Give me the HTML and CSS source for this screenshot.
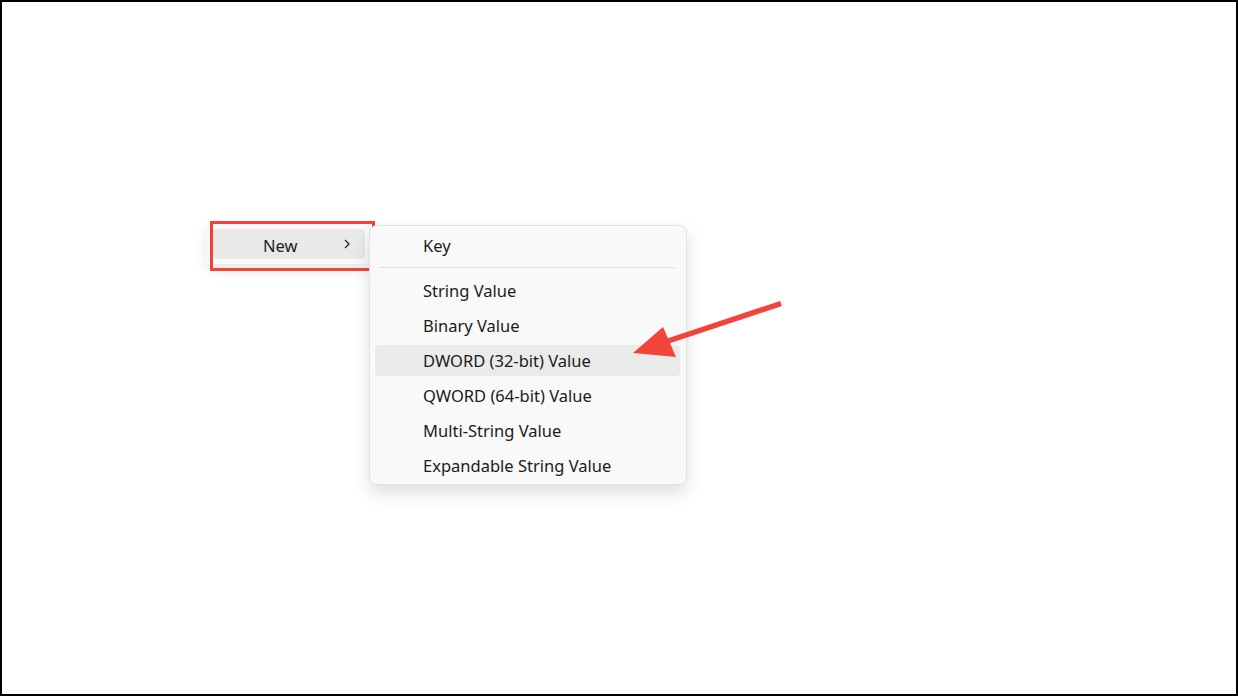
FILE: index.html
```html
<!DOCTYPE html>
<html>
<head>
<meta charset="utf-8">
<link rel="stylesheet" href="styles.css">
</head>
<body>
<div class="frame">
  <div class="parent-menu">
    <div class="parent-item">
      <span class="parent-label">New</span>
      <svg class="chev" width="8" height="10" viewBox="0 0 8 10"><path d="M2 1 L6 5 L2 9" fill="none" stroke="#222" stroke-width="1.2"/></svg>
    </div>
  </div>
  <div class="red-box"></div>
  <div class="submenu">
    <div class="item">Key</div>
    <div class="sep"></div>
    <div class="item">String Value</div>
    <div class="item">Binary Value</div>
    <div class="item hover">DWORD (32-bit) Value</div>
    <div class="item">QWORD (64-bit) Value</div>
    <div class="item">Multi-String Value</div>
    <div class="item last">Expandable String Value</div>
  </div>
  <svg class="arrow" width="1238" height="696" viewBox="0 0 1238 696">
    <line x1="781" y1="303.5" x2="662" y2="343" stroke="#f2443a" stroke-width="5.5"/>
    <polygon points="633,353 663,327 676,357" fill="#f2443a"/>
  </svg>
</div>
</body>
</html>
```
FILE: styles.css
```css
html, body {
  margin: 0;
  padding: 0;
  background: #fff;
}
.frame {
  position: relative;
  width: 1238px;
  height: 696px;
  box-sizing: border-box;
  border: 2px solid #000;
  background: #fff;
  overflow: hidden;
  font-family: "Noto Sans", "Open Sans", sans-serif;
  color: #1b1b1b;
}
.parent-menu {
  position: absolute;
  left: 205px;
  top: 220px;
  width: 164px;
  height: 42px;
  background: #f9f9f9;
  box-shadow: 0 6px 14px rgba(0,0,0,0.10);
  padding: 7px 0 0 6px;
  box-sizing: border-box;
}
.parent-item {
  width: 152px;
  height: 30px;
  background: #e9e9e9;
  border-radius: 4px;
  display: flex;
  align-items: center;
  position: relative;
}
.parent-label {
  font-size: 16.5px;
  margin-left: 50px;
  padding-top: 2px;
}
.chev {
  position: absolute;
  left: 130px;
  top: 10px;
}
.red-box {
  position: absolute;
  left: 208px;
  top: 219px;
  width: 165px;
  height: 50px;
  border: 3px solid #f44336;
  box-sizing: border-box;
}
.submenu {
  position: absolute;
  left: 367px;
  top: 223px;
  width: 318px;
  height: 260px;
  box-sizing: border-box;
  background: #f9f9f9;
  border: 1px solid #e3e3e3;
  border-radius: 8px;
  box-shadow: 0 8px 18px rgba(0,0,0,0.13);
  padding: 4px 6px 3px 5px;
  display: flex;
  flex-direction: column;
  gap: 4px;
}
.item {
  height: 31px;
  flex: none;
  display: flex;
  align-items: center;
  padding-left: 48px;
  font-size: 16.5px;
  border-radius: 4px;
}
.item.hover {
  background: #ebebeb;
}
.sep {
  height: 1px;
  flex: none;
  background: #dcdcdc;
  margin: 2px 5px 3px 5px;
}
.arrow {
  position: absolute;
  left: -2px;
  top: -2px;
}
```
